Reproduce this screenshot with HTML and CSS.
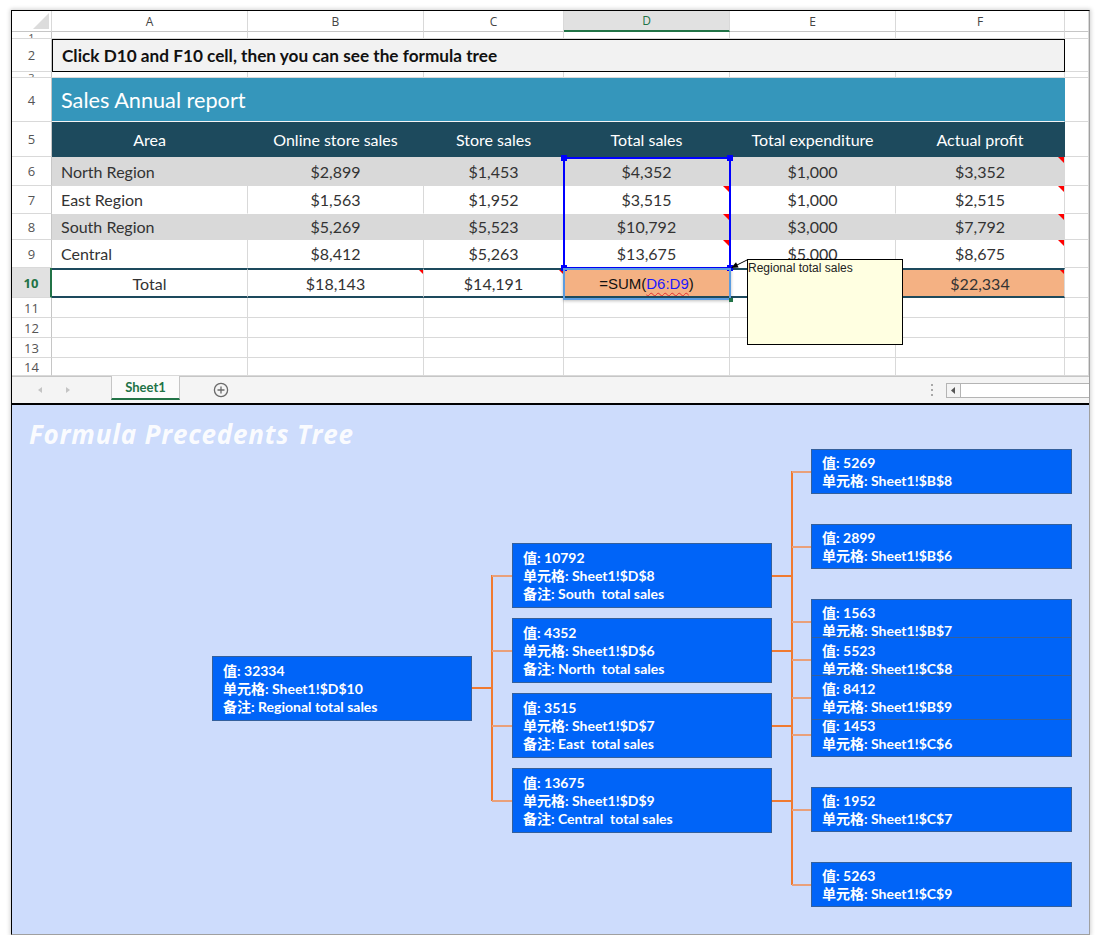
FILE: index.html
```html
<!DOCTYPE html>
<html>
<head>
<meta charset="utf-8">
<title>Formula Precedents Tree</title>
<link rel="stylesheet" href="styles.css">
</head>
<body>
<div class="frame">
  <div class="sheet">
    <div class="row colhead">
      <div class="c corner"><svg width="16" height="16" viewBox="0 0 16 16"><polygon points="16,0 16,16 0,16" fill="#dcdcdc"/></svg></div>
      <div class="c">A</div><div class="c">B</div><div class="c">C</div><div class="c sel">D</div><div class="c">E</div><div class="c">F</div><div class="c"></div>
    </div>
    <div class="row r1">
      <div class="c rh">1</div><div class="c"></div><div class="c"></div><div class="c"></div><div class="c"></div><div class="c"></div><div class="c"></div><div class="c"></div>
    </div>
    <div class="row r2">
      <div class="c rh">2</div><div class="c span banner">Click D10 and F10 cell, then you can see the formula tree</div><div class="c"></div>
    </div>
    <div class="row r3">
      <div class="c rh">3</div><div class="c"></div><div class="c"></div><div class="c"></div><div class="c"></div><div class="c"></div><div class="c"></div><div class="c"></div>
    </div>
    <div class="row r4">
      <div class="c rh">4</div><div class="c span title">Sales Annual report</div><div class="c"></div>
    </div>
    <div class="row r5">
      <div class="c rh">5</div>
      <div class="c hd">Area</div><div class="c hd">Online store sales</div><div class="c hd">Store sales</div><div class="c hd">Total sales</div><div class="c hd">Total expenditure</div><div class="c hd">Actual profit</div><div class="c"></div>
    </div>
    <div class="row r6 band">
      <div class="c rh">6</div>
      <div class="c d left">North Region</div><div class="c d">$2,899</div><div class="c d">$1,453</div><div class="c d">$4,352</div><div class="c d">$1,000</div><div class="c d n">$3,352</div><div class="c"></div>
    </div>
    <div class="row r7 plain">
      <div class="c rh">7</div>
      <div class="c d left">East Region</div><div class="c d">$1,563</div><div class="c d">$1,952</div><div class="c d n">$3,515</div><div class="c d">$1,000</div><div class="c d n">$2,515</div><div class="c"></div>
    </div>
    <div class="row r8 band">
      <div class="c rh">8</div>
      <div class="c d left">South Region</div><div class="c d">$5,269</div><div class="c d">$5,523</div><div class="c d n">$10,792</div><div class="c d">$3,000</div><div class="c d n">$7,792</div><div class="c"></div>
    </div>
    <div class="row r9 plain">
      <div class="c rh">9</div>
      <div class="c d left">Central</div><div class="c d">$8,412</div><div class="c d">$5,263</div><div class="c d n">$13,675</div><div class="c d">$5,000</div><div class="c d n">$8,675</div><div class="c"></div>
    </div>
    <div class="row r10 total">
      <div class="c rh active-row">10</div>
      <div class="c d">Total</div><div class="c d n">$18,143</div><div class="c d n">$14,191</div><div class="c d orange formula">=SUM(<span class="ref">D6:D9</span>)</div><div class="c d">$10,000</div><div class="c d orange n">$22,334</div><div class="c"></div>
    </div>
    <div class="row r11">
      <div class="c rh">11</div><div class="c"></div><div class="c"></div><div class="c"></div><div class="c"></div><div class="c"></div><div class="c"></div><div class="c"></div>
    </div>
    <div class="row r12">
      <div class="c rh">12</div><div class="c"></div><div class="c"></div><div class="c"></div><div class="c"></div><div class="c"></div><div class="c"></div><div class="c"></div>
    </div>
    <div class="row r13">
      <div class="c rh">13</div><div class="c"></div><div class="c"></div><div class="c"></div><div class="c"></div><div class="c"></div><div class="c"></div><div class="c"></div>
    </div>
    <div class="row r14">
      <div class="c rh">14</div><div class="c"></div><div class="c"></div><div class="c"></div><div class="c"></div><div class="c"></div><div class="c"></div><div class="c"></div>
    </div>

    <div class="range"><i class="h tl"></i><i class="h tr"></i><i class="h bl"></i><i class="h br"></i></div>
    <div class="activecell"><i class="fill"></i></div>
    <svg class="pointer" width="1077" height="365" viewBox="0 0 1077 365">
      <line x1="735" y1="249" x2="723" y2="255" stroke="#000" stroke-width="1"/>
      <polygon points="719,257 726.6,256.6 724,251.2" fill="#000"/>
    </svg>
    <div class="comment">Regional total sales</div>
  </div>

  <div class="tabbar">
    <span class="nav"><svg width="16" height="12" viewBox="0 0 16 12"><polygon points="10,3 6,6 10,9" fill="#c4c4c4"/></svg></span>
    <span class="nav"><svg width="16" height="12" viewBox="0 0 16 12"><polygon points="6,3 10,6 6,9" fill="#c4c4c4"/></svg></span>
    <span class="tab">Sheet1</span>
    <span class="add"><svg width="16" height="16" viewBox="0 0 16 16"><circle cx="8" cy="8" r="6.6" fill="none" stroke="#6a6a6a" stroke-width="1.3"/><path d="M8 4.5V11.5M4.5 8H11.5" stroke="#6a6a6a" stroke-width="1.3"/></svg></span>
    <span class="dots"><svg width="6" height="14" viewBox="0 0 6 14"><rect x="2" y="1" width="2" height="2" fill="#a8a8a8"/><rect x="2" y="6" width="2" height="2" fill="#a8a8a8"/><rect x="2" y="11" width="2" height="2" fill="#a8a8a8"/></svg></span>
    <span class="hscroll"><span class="sbtn"><svg width="13" height="13" viewBox="0 0 13 13"><polygon points="8,3 4,6.5 8,10" fill="#555"/></svg></span></span>
  </div>

  <div class="tree">
    <div class="tree-title">Formula Precedents Tree</div>
    <svg class="links" width="1077" height="529" viewBox="0 0 1077 529">
      <g fill="none" stroke-width="2">
        <path stroke="#f07a30" d="M460 283H480M480 170V396"/>
        <path stroke="#e9a07a" d="M480 171H500M480 246H500M480 321H500M480 396H500"/>
        <path stroke="#f07a30" d="M760 171H780M760 246H780M760 321H780M760 396H780M780 66V480"/>
        <path stroke="#e9a07a" d="M780 67H799M780 142H799M780 217H799M780 255H799M780 293H799M780 330H799M780 405H799M780 480H799"/>
      </g>
    </svg>

    <div class="node big" style="left:200px;top:251px"><div>值: 32334</div><div>单元格: Sheet1!$D$10</div><div>备注: Regional total sales</div></div>

    <div class="node big" style="left:500px;top:138px"><div>值: 10792</div><div>单元格: Sheet1!$D$8</div><div>备注: South&nbsp; total sales</div></div>
    <div class="node big" style="left:500px;top:213px"><div>值: 4352</div><div>单元格: Sheet1!$D$6</div><div>备注: North&nbsp; total sales</div></div>
    <div class="node big" style="left:500px;top:288px"><div>值: 3515</div><div>单元格: Sheet1!$D$7</div><div>备注: East&nbsp; total sales</div></div>
    <div class="node big" style="left:500px;top:363px"><div>值: 13675</div><div>单元格: Sheet1!$D$9</div><div>备注: Central&nbsp; total sales</div></div>

    <div class="node leaf" style="left:799px;top:44px"><div>值: 5269</div><div>单元格: Sheet1!$B$8</div></div>
    <div class="node leaf" style="left:799px;top:119px"><div>值: 2899</div><div>单元格: Sheet1!$B$6</div></div>
    <div class="node leaf" style="left:799px;top:194px"><div>值: 1563</div><div>单元格: Sheet1!$B$7</div></div>
    <div class="node leaf" style="left:799px;top:232px"><div>值: 5523</div><div>单元格: Sheet1!$C$8</div></div>
    <div class="node leaf" style="left:799px;top:307px"><div>值: 1453</div><div>单元格: Sheet1!$C$6</div></div>
    <div class="node leaf" style="left:799px;top:270px"><div>值: 8412</div><div>单元格: Sheet1!$B$9</div></div>
    <div class="node leaf" style="left:799px;top:382px"><div>值: 1952</div><div>单元格: Sheet1!$C$7</div></div>
    <div class="node leaf" style="left:799px;top:457px"><div>值: 5263</div><div>单元格: Sheet1!$C$9</div></div>
  </div>
</div>
</body>
</html>
```
FILE: styles.css
```css
* { box-sizing: border-box; }
html, body { margin: 0; padding: 0; background: #fff; }

.frame {
  margin: 10px 0 0 11px;
  width: 1079px;
  border: 1px solid;
  border-color: #000 #a0a0a0 #a0a0a0 #000;
  box-shadow: 0 0 4px 1px rgba(0,0,0,0.18);
  font-family: "Lato", "Noto Sans", sans-serif;
}

/* ---------- spreadsheet ---------- */
.sheet { position: relative; height: 365px; overflow: hidden; background: #fff; }

.row {
  display: grid;
  grid-template-columns: 40px 196px 176px 140px 166px 166px 169px 24px;
}
.c {
  position: relative;
  display: flex;
  align-items: center;
  justify-content: center;
  overflow: hidden;
  white-space: nowrap;
  border-right: 1px solid #d9d9d9;
  border-bottom: 1px solid #d9d9d9;
}
.span { grid-column: 2 / 8; }

.colhead { height: 21px; }
.colhead .c {
  font: 12px "Open Sans", sans-serif;
  color: #444;
  border-bottom-color: #c6c6c6;
}
.colhead .c.sel {
  background: #e1e1e1;
  color: #217346;
  border-bottom: 2px solid #217346;
}
.corner { justify-content: flex-end; align-items: flex-end; padding: 0 2px 2px 0; }

.rh {
  font: 13px "Open Sans", sans-serif;
  color: #555;
  border-right-color: #c6c6c6;
}
.rh.active-row {
  background: #e1e1e1;
  color: #217346;
  font-weight: 700;
  border-right: 2px solid #217346;
}

.r1 { height: 7px; }
.r2 { height: 33px; }
.r3 { height: 6px; }
.r4 { height: 44px; }
.r5 { height: 35px; }
.r6 { height: 29px; }
.r7 { height: 28px; }
.r8 { height: 26px; }
.r9 { height: 28px; }
.r10 { height: 30px; }
.r11, .r12, .r13 { height: 20px; }
.r14 { height: 18px; }

.r1 .rh, .r3 .rh { font-size: 11px; line-height: 1; align-items: flex-start; }

.banner {
  justify-content: flex-start;
  padding-left: 9px;
  background: #f2f2f2;
  border: 1px solid #000;
  font: 700 17.2px "Lato", sans-serif;
  color: #111;
}
.title {
  justify-content: flex-start;
  padding-left: 9px;
  background: #3596bb;
  color: #fff;
  font: 21.7px "Lato", sans-serif;
  border-right-color: #3596bb;
  border-bottom-color: #f4f4f4;
}
.hd {
  background: #1d4a5d;
  color: #fff;
  font-size: 16px;
  border-right-color: #1d4a5d;
  border-bottom-color: #1d4a5d;
}
.d { font-size: 16px; color: #333; }
.d.left { justify-content: flex-start; padding-left: 9px; }
.band .d { background: #d9d9d9; border-right-color: #d9d9d9; border-bottom-color: #d9d9d9; }
.plain .d { border-bottom-color: #fff; }

.total .d {
  border-top: 2px solid #1d4a5d;
  border-bottom: 2px solid #1d4a5d;
}
.orange { background: #f4b183; }
.formula { font: 15px "Liberation Sans", Arial, sans-serif; color: #111; }
.ref {
  color: #1a1aff;
  text-decoration: underline wavy #e03030;
  text-decoration-thickness: 1px;
  text-underline-offset: 3px;
}

/* comment indicator */
.n::after {
  content: "";
  position: absolute;
  top: 0;
  right: 0;
  border-top: 6px solid #f00;
  border-left: 6px solid transparent;
}
.total .n::after { top: -2px; }

/* overlays */
.range {
  position: absolute;
  left: 551px;
  top: 146px;
  width: 168px;
  height: 112px;
  border: 2px solid #0000ff;
}
.range .h {
  position: absolute;
  width: 6px;
  height: 6px;
  background: #0000ff;
}
.range .tl { left: -4px; top: -4px; }
.range .tr { right: -4px; top: -4px; }
.range .bl { left: -4px; bottom: -4px; }
.range .br { right: -4px; bottom: -4px; }

.activecell {
  position: absolute;
  left: 551px;
  top: 257px;
  width: 168px;
  height: 32px;
  border: 2px solid #5b9ce0;
  box-shadow: 0 1px 3px rgba(0,0,0,0.25);
}
.activecell .fill {
  position: absolute;
  right: -4px;
  bottom: -4px;
  width: 4px;
  height: 4px;
  background: #217346;
}

.pointer { position: absolute; left: 0; top: 0; pointer-events: none; }

.comment {
  position: absolute;
  left: 735px;
  top: 248px;
  width: 156px;
  height: 86px;
  background: #ffffe1;
  border: 1px solid #000;
  font: 12px "Liberation Sans", Arial, sans-serif;
  color: #222;
  padding: 1px 0 0 0;
}

/* ---------- tab bar ---------- */
.tabbar {
  height: 27px;
  display: flex;
  align-items: flex-start;
  padding-left: 20px;
  background: #f4f4f4;
  border-top: 1px solid #c6c6c6;
}
.nav { width: 16px; height: 26px; display: flex; align-items: center; margin-right: 12px; }
.nav + .nav { margin-right: 0; }
.tab {
  margin-left: 35px;
  width: 69px;
  height: 24px;
  margin-top: -1px;
  display: flex;
  align-items: center;
  justify-content: center;
  background: #fbfbfb;
  border-left: 1px solid #c6c6c6;
  border-right: 1px solid #c6c6c6;
  border-bottom: 2px solid #217346;
  color: #217346;
  font: 700 13px "Lato", sans-serif;
}
.add { margin-left: 33px; height: 26px; display: flex; align-items: center; }
.dots { margin-left: auto; height: 26px; display: flex; align-items: center; margin-right: 11px; }
.hscroll {
  margin-top: 6px;
  width: 143px;
  height: 15px;
  border: 1px solid #b4b4b4;
  border-right: none;
  background: #fff;
  display: flex;
}
.sbtn {
  width: 14px;
  height: 13px;
  border-right: 1px solid #b4b4b4;
  background: #f4f4f4;
  display: flex;
  align-items: center;
  justify-content: center;
}

/* ---------- tree ---------- */
.tree {
  position: relative;
  height: 531px;
  border-top: 2px solid #000;
  background: #cddcfc;
  overflow: hidden;
}
.tree-title {
  padding: 11px 0 0 17px;
  font: italic 700 26px "Open Sans", sans-serif;
  letter-spacing: 0.8px;
  color: rgba(255,255,255,0.93);
}
.links { position: absolute; left: 0; top: 0; }
.node {
  position: absolute;
  width: 260px;
  display: flex;
  flex-direction: column;
  justify-content: center;
  padding-left: 10px;
  background: #0064f8;
  border: 1px solid #34609c;
  color: #fff;
  font: 700 14px/18px "Lato", "Noto Sans CJK SC", sans-serif;
  white-space: nowrap;
}
.node.big { height: 65px; }
.node.leaf { height: 45px; width: 261px; }
```
